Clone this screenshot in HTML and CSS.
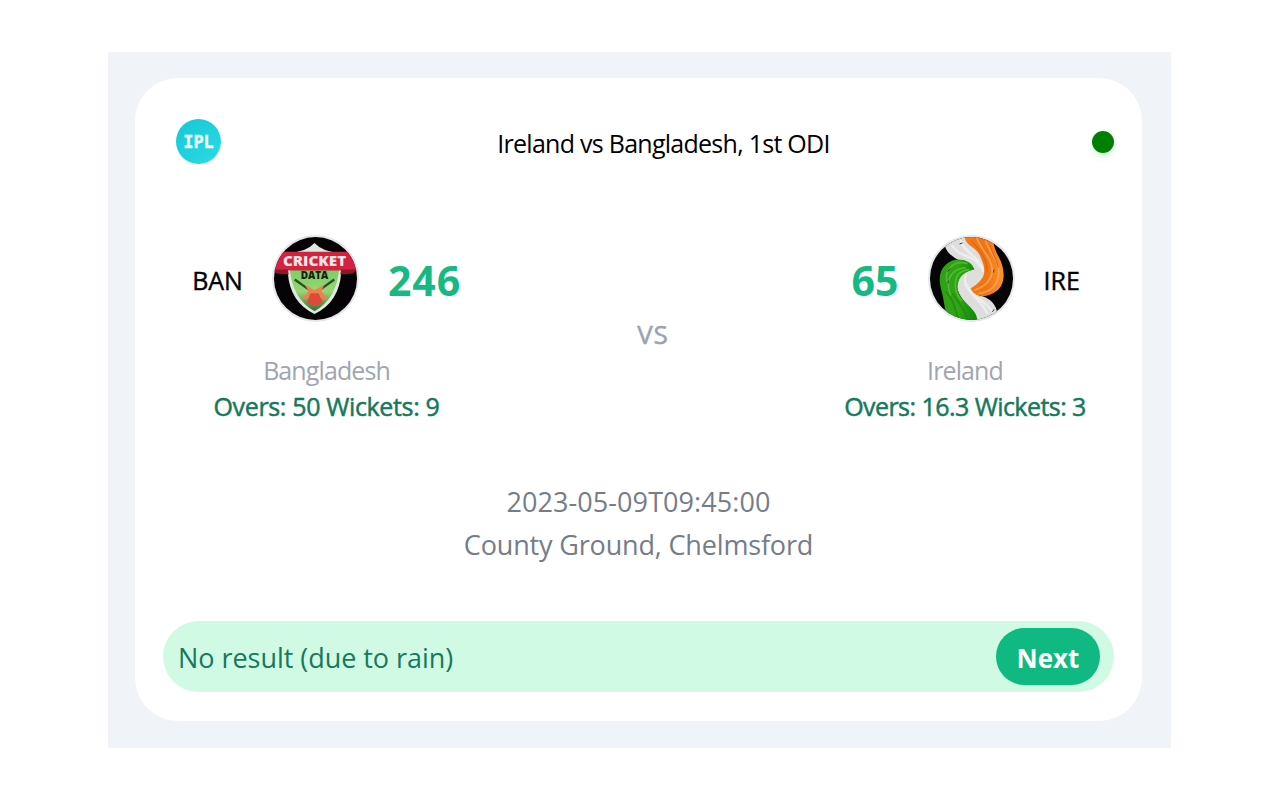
FILE: index.html
```html
<!DOCTYPE html>
<html lang="en">
<head>
<meta charset="utf-8">
<title>Cricket scores</title>
<link rel="stylesheet" href="styles.css">
</head>
<body>
<main class="board">
  <article class="card">
    <header class="head">
      <div class="league"><span>IPL</span></div>
      <h1 class="title"><span>Ireland vs Bangladesh, 1st ODI</span></h1>
      <span class="live"></span>
    </header>
    <section class="teams">
      <div class="team">
        <div class="score-row">
          <span class="code ban">BAN</span>
          <svg class="crest" viewBox="0 0 88 88">
            <defs>
              <clipPath id="disc"><circle cx="44" cy="44" r="42"/></clipPath>
              <linearGradient id="shield" x1="0" y1="0" x2="0" y2="1"><stop offset="0" stop-color="#77ce63"/><stop offset=".55" stop-color="#9ad474"/><stop offset="1" stop-color="#2f7440"/></linearGradient>
              <filter id="soft"><feGaussianBlur stdDeviation=".7"/></filter>
            </defs>
            <circle cx="44" cy="44" r="44" fill="#e5e7eb"/>
            <g clip-path="url(#disc)">
              <rect width="88" height="88" fill="#050305"/>
              <g filter="url(#soft)">
                <path d="M15 18Q34 18 43 8Q52 18 71 18L70 38Q68 68 43 80Q18 68 16 38Z" fill="#dfeade"/>
                <path d="M18 33H68Q66 64 43 77Q20 64 18 33Z" fill="url(#shield)"/>
                <path d="M23 45L37 55M63 45L49 55" stroke="#245229" stroke-width="2.4"/>
                <path d="M33 50L43 56L53 50L50 57L57 66L47 63L43 68L39 63L29 66L37 57Z" fill="#f08050"/>
                <path d="M35 69L39 59H47L52 69L43 72Z" fill="#dc4c38"/>
                <path d="M7 17H80L86 36H1Z" fill="#d3213f"/>
                <path d="M1 35H16L17 40L4 39ZM86 35H70L69 40L82 39Z" fill="#90142b"/>
              </g>
              <text class="crest-name" x="43" y="31" textLength="64" lengthAdjust="spacingAndGlyphs">CRICKET</text>
              <text class="crest-data" x="43" y="44.5" textLength="28" lengthAdjust="spacingAndGlyphs">DATA</text>
            </g>
          </svg>
          <strong class="runs ban-runs">246</strong>
        </div>
        <div class="name">Bangladesh</div>
        <div class="stats">Overs: 50 Wickets: 9</div>
      </div>
      <div class="versus">VS</div>
      <div class="team away">
        <div class="score-row">
          <strong class="runs ire-runs">65</strong>
          <svg class="crest" viewBox="0 0 88 88">
            <defs>
              <linearGradient id="green"><stop stop-color="#2fa014"/><stop offset=".5" stop-color="#30a414"/><stop offset="1" stop-color="#128606"/></linearGradient>
              <linearGradient id="orange"><stop stop-color="#f47b17"/><stop offset=".55" stop-color="#ed7414"/><stop offset="1" stop-color="#ff9230"/></linearGradient>
            </defs>
            <circle cx="44" cy="44" r="44" fill="#e5e7eb"/>
            <g clip-path="url(#disc)">
              <rect width="88" height="88" fill="#050505"/>
              <g filter="url(#soft)">
                <path d="M16 0H44L62 25L58 47L46 58C57 64 70 63 71 86H47C45 72 29 65 29 48L38 31C36 25 22 25 17 11Z" fill="#dedede"/>
                <g fill="none" stroke="#f2f2f2" stroke-width="2.4" opacity=".75">
                  <path d="M24 10C33 25 47 18 53 33M33 5C37 20 52 20 56 37M39 39C31 56 55 64 60 80M39 50C44 62 62 69 67 80"/>
                </g>
                <path d="M47 35C43 23 26 22 18 30C9 38 12 49 14 58C17 69 16 80 25 88H50C51 73 29 67 30 52C31 40 39 37 47 35Z" fill="url(#green)"/>
                <g fill="none" stroke="#62c83f" stroke-width="1.6" opacity=".65">
                  <path d="M40 29C23 24 15 40 20 49M38 33C20 35 18 49 23 62M42 35C25 36 24 54 34 67"/>
                </g>
                <g fill="none" stroke="#188a0a" stroke-width="1.7" opacity=".7">
                  <path d="M18 57C28 68 27 76 31 86M25 59C31 70 39 76 40 87"/>
                </g>
                <path d="M37 0C37 12 49 11 53 22C59 35 60 44 43 54C48 64 60 64 69 57C80 49 77 32 72 23C67 14 66 8 65 0Z" fill="url(#orange)"/>
                <g fill="none" stroke="#ffb566" stroke-width="1.8" opacity=".6">
                  <path d="M49 2C53 15 66 24 65 38C62 50 55 52 47 56M58 6C63 19 74 28 71 43C68 55 60 58 51 59"/>
                </g>
                <path d="M43 5C51 14 60 22 60 38M63 10C65 20 70 25 71 33" fill="none" stroke="#dc6812" stroke-width="1.2"/>
                <path d="M32 9L35 8M20 37L22 34M20 49L21 46M66 38L67 35M52 62L53 61M65 78L67 75" stroke="#334030"/>
              </g>
            </g>
          </svg>
          <span class="code ire">IRE</span>
        </div>
        <div class="name ireland">Ireland</div>
        <div class="stats away-stats">Overs: 16.3 Wickets: 3</div>
      </div>
    </section>
    <section class="details">
      <time>2023-05-09T09:45:00</time>
      <div class="venue">County Ground, Chelmsford</div>
    </section>
    <footer class="result">
      <span class="outcome">No result (due to rain)</span>
      <button class="next">Next</button>
    </footer>
  </article>
</main>
</body>
</html>
```
FILE: styles.css
```css
* { box-sizing: border-box; }
body { margin: 0; background: #fff; font-family: "Open Sans", "Noto Sans", sans-serif; white-space: nowrap; }
.board { width: 1063px; height: 696px; margin: 52px 0 0 108px; padding: 26px 29px 27px 27px; background: #f0f3f8; }
.card { height: 643px; padding: 41px 28px 29px; border-radius: 43px; background: #fff; display: flex; flex-direction: column; }
.head { height: 45px; padding-left: 13px; display: flex; align-items: center; }
.league { width: 45px; height: 45px; border-radius: 50%; background: linear-gradient(140deg, #16c6d5, #2bdce5); display: grid; place-items: center; color: #effeff; font: bold 17px "DejaVu Sans Mono", monospace; -webkit-text-stroke: .3px currentColor; }
.title { flex: 1; margin: 2px 0 0 14px; text-align: center; font-size: 25px; line-height: 36px; font-weight: 400; letter-spacing: -.73px; color: #000; }
.live { width: 22px; height: 22px; border-radius: 50%; background: #008000; box-shadow: 0 5px 7px #dffbe9; }
.teams { height: 266px; padding-top: 70px; display: grid; grid-template-columns: 327px 326px 298px; }
.team { display: flex; flex-direction: column; align-items: center; }
.away .score-row { padding-left: 1px; }
.score-row { height: 89px; display: flex; align-items: center; gap: 29px; }
.crest { width: 87px; height: 87px; flex: none; }
.crest-name { fill: #ffe3e9; font: 800 15px "Open Sans", sans-serif; text-anchor: middle; }
.crest-data { fill: #182018; font: 800 10px "Open Sans", sans-serif; text-anchor: middle; }
.code { font-size: 25px; line-height: 36px; font-weight: 500; color: #000; padding-top: 2px; text-align: center; -webkit-text-stroke: .4px currentColor; }
.ban { width: 51px; letter-spacing: -.1px; }
.ire { width: 36px; letter-spacing: 0; }
.runs { font-size: 41px; line-height: 56px; font-weight: 700; color: #16b883; padding-top: 2px; text-align: center; }
.ban-runs { width: 73px; letter-spacing: .9px; }
.ire-runs { width: 47px; letter-spacing: .1px; }
.name { margin-top: 29px; font-size: 25px; line-height: 36px; letter-spacing: -.9px; color: #a0a5b0; }
.stats { font-size: 25px; line-height: 36px; letter-spacing: -.35px; color: #16795c; -webkit-text-stroke: .5px currentColor; }
.away-stats { letter-spacing: -.55px; }
.versus { text-align: center; padding-top: 82px; font-size: 26px; line-height: 37px; letter-spacing: .8px; color: #9ca3af; -webkit-text-stroke: .5px currentColor; }
.details { height: 191px; padding-top: 50px; text-align: center; font-size: 27px; line-height: 43px; color: #747d88; }
.details time { display: block; letter-spacing: .08px; }
.venue { letter-spacing: -.16px; }
.result { height: 71px; flex: none; padding: 0 14px; border-radius: 36px; background: #d1fae5; display: flex; align-items: center; justify-content: space-between; }
.outcome { padding: 2px 0 0 1px; font-size: 27px; line-height: 43px; letter-spacing: -.04px; color: #16795c; }
.next { width: 104px; height: 57px; border: 0; padding: 2px 0 0; border-radius: 29px; background: #10b981; color: #fff; font: 700 26px/40px "Open Sans", sans-serif; }
```
